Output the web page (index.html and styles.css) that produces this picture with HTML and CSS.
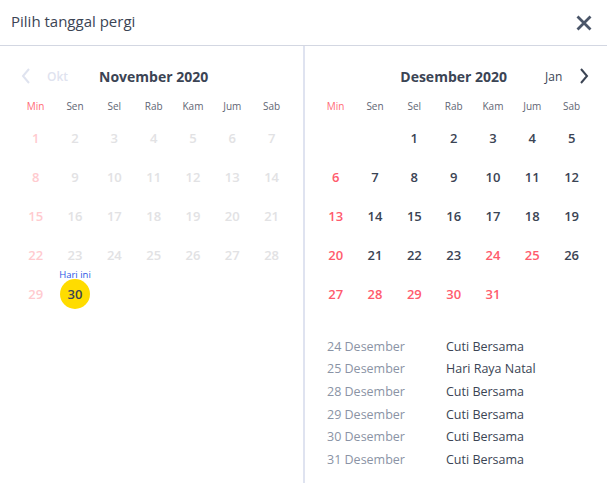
FILE: index.html
```html
<!DOCTYPE html>
<html lang="id">
<head>
<meta charset="utf-8">
<title>Pilih tanggal pergi</title>
<link rel="stylesheet" href="styles.css">
</head>
<body>
<div class="modal">
  <header class="top">
    <h1 class="title">Pilih tanggal pergi</h1>
    <svg class="close" width="18" height="18" viewBox="0 0 18 18" aria-label="Tutup">
      <path d="M2.5 2.5 L15.5 15.5 M15.5 2.5 L2.5 15.5" stroke="#4a5568" stroke-width="2.8" stroke-linecap="butt" fill="none"/>
    </svg>
  </header>
  <div class="body">
    <section class="panel left">
      <div class="cal">
        <div class="mhead">
          <div class="nav prev">
            <svg width="10" height="16" viewBox="0 0 10 16"><path d="M8 1 L2 8 L8 15" stroke="#dfe3ef" stroke-width="2" fill="none"/></svg>
            <span class="navlabel faded">Okt</span>
          </div>
          <div class="mtitle">November 2020</div>
          <div class="nav next"></div>
        </div>
        <div class="grid wd">
          <span class="sun">Min</span><span>Sen</span><span>Sel</span><span>Rab</span><span>Kam</span><span>Jum</span><span>Sab</span>
        </div>
        <div class="grid days past">
          <span class="sun">1</span><span>2</span><span>3</span><span>4</span><span>5</span><span>6</span><span>7</span>
          <span class="sun">8</span><span>9</span><span>10</span><span>11</span><span>12</span><span>13</span><span>14</span>
          <span class="sun">15</span><span>16</span><span>17</span><span>18</span><span>19</span><span>20</span><span>21</span>
          <span class="sun">22</span><span>23</span><span>24</span><span>25</span><span>26</span><span>27</span><span>28</span>
          <span class="sun">29</span><span class="today"><em class="tlabel">Hari ini</em><b class="dot">30</b></span>
        </div>
      </div>
    </section>
    <section class="panel right">
      <div class="cal">
        <div class="mhead">
          <div class="nav prev"></div>
          <div class="mtitle">Desember 2020</div>
          <div class="nav next">
            <span class="navlabel">Jan</span>
            <svg width="10" height="16" viewBox="0 0 10 16"><path d="M2 1 L8 8 L2 15" stroke="#3b4454" stroke-width="2" fill="none"/></svg>
          </div>
        </div>
        <div class="grid wd">
          <span class="sun">Min</span><span>Sen</span><span>Sel</span><span>Rab</span><span>Kam</span><span>Jum</span><span>Sab</span>
        </div>
        <div class="grid days">
          <span></span><span></span><span>1</span><span>2</span><span>3</span><span>4</span><span>5</span>
          <span class="sun">6</span><span>7</span><span>8</span><span>9</span><span>10</span><span>11</span><span>12</span>
          <span class="sun">13</span><span>14</span><span>15</span><span>16</span><span>17</span><span>18</span><span>19</span>
          <span class="sun">20</span><span>21</span><span>22</span><span>23</span><span class="hol">24</span><span class="hol">25</span><span>26</span>
          <span class="sun">27</span><span class="hol">28</span><span class="hol">29</span><span class="hol">30</span><span class="hol">31</span>
        </div>
      </div>
      <ul class="holidays">
        <li><span class="hd">24 Desember</span><span class="hn">Cuti Bersama</span></li>
        <li><span class="hd">25 Desember</span><span class="hn">Hari Raya Natal</span></li>
        <li><span class="hd">28 Desember</span><span class="hn">Cuti Bersama</span></li>
        <li><span class="hd">29 Desember</span><span class="hn">Cuti Bersama</span></li>
        <li><span class="hd">30 Desember</span><span class="hn">Cuti Bersama</span></li>
        <li><span class="hd">31 Desember</span><span class="hn">Cuti Bersama</span></li>
      </ul>
    </section>
  </div>
</div>
</body>
</html>
```

FILE: styles.css
```css
* { box-sizing: border-box; }
html, body { margin: 0; padding: 0; background: #fff; }
body {
  font-family: "Open Sans", "Noto Sans", sans-serif;
  color: #3b4454;
  width: 607px;
  height: 483px;
  overflow: hidden;
}
.modal { display: flex; flex-direction: column; height: 483px; }
.top {
  height: 46px;
  border-bottom: 1px solid #d3d7e2;
  display: flex;
  align-items: center;
  justify-content: space-between;
  padding: 0 14px 3px 11px;
  flex: none;
}
.title {
  margin: 0;
  font-size: 15px;
  font-weight: 400;
  color: #3b4454;
}
.close { display: block; margin-top: 3px; }
.body { display: flex; flex: 1; }
.panel { flex: none; }
.left { width: 305px; border-right: 2px solid #dfe3f0; padding: 0 12px 0 16px; }
.right { width: 302px; padding: 0 15px 0 11px; }
.cal { width: 275.3px; }
.mhead {
  margin-top: 15px;
  height: 30px;
  display: grid;
  grid-template-columns: 1fr auto 1fr;
  align-items: center;
}
.mtitle { font-size: 14px; font-weight: 700; color: #3b4454; }
.nav { display: flex; align-items: center; }
.nav svg { display: block; }
.prev { justify-content: flex-start; padding-left: 5px; gap: 16px; }
.next { justify-content: flex-end; padding-right: 2px; gap: 17px; }
.navlabel { font-size: 12px; font-weight: 400; color: #3b4454; }
.navlabel.faded { color: #dfe3ef; font-weight: 600; }
.grid { display: grid; grid-template-columns: repeat(7, 1fr); text-align: center; }
.wd { height: 28px; align-items: center; font-size: 10px; color: #5f6674; padding-top: 2px; }
.wd .sun { color: #ff6b78; }
.days { margin-top: -1px; }
.days span {
  height: 39px;
  display: flex;
  align-items: center;
  justify-content: center;
  font-size: 13px;
  font-weight: 600;
  color: #3b4454;
}
.days .sun, .days .hol { color: #ff5b6d; }
.past span { color: #e2e2e4; }
.past .sun { color: #ffcbcf; }
.past .today { position: relative; }
.tlabel {
  position: absolute;
  top: -6px;
  left: 0;
  right: 0;
  font-style: normal;
  font-weight: 400;
  font-size: 9.5px;
  color: #2a58e6;
}
.dot {
  width: 30px;
  height: 30px;
  border-radius: 50%;
  background: #ffdc00;
  display: flex;
  align-items: center;
  justify-content: center;
  color: #3b4454;
  font-weight: 600;
  font-size: 13px;
}
.holidays {
  list-style: none;
  margin: 22px 0 0 11px;
  padding: 0;
  font-size: 12.5px;
}
.holidays li { display: flex; height: 22.6px; align-items: center; }
.hd { width: 119px; color: #8a93a5; }
.hn { color: #3b4454; }
```
